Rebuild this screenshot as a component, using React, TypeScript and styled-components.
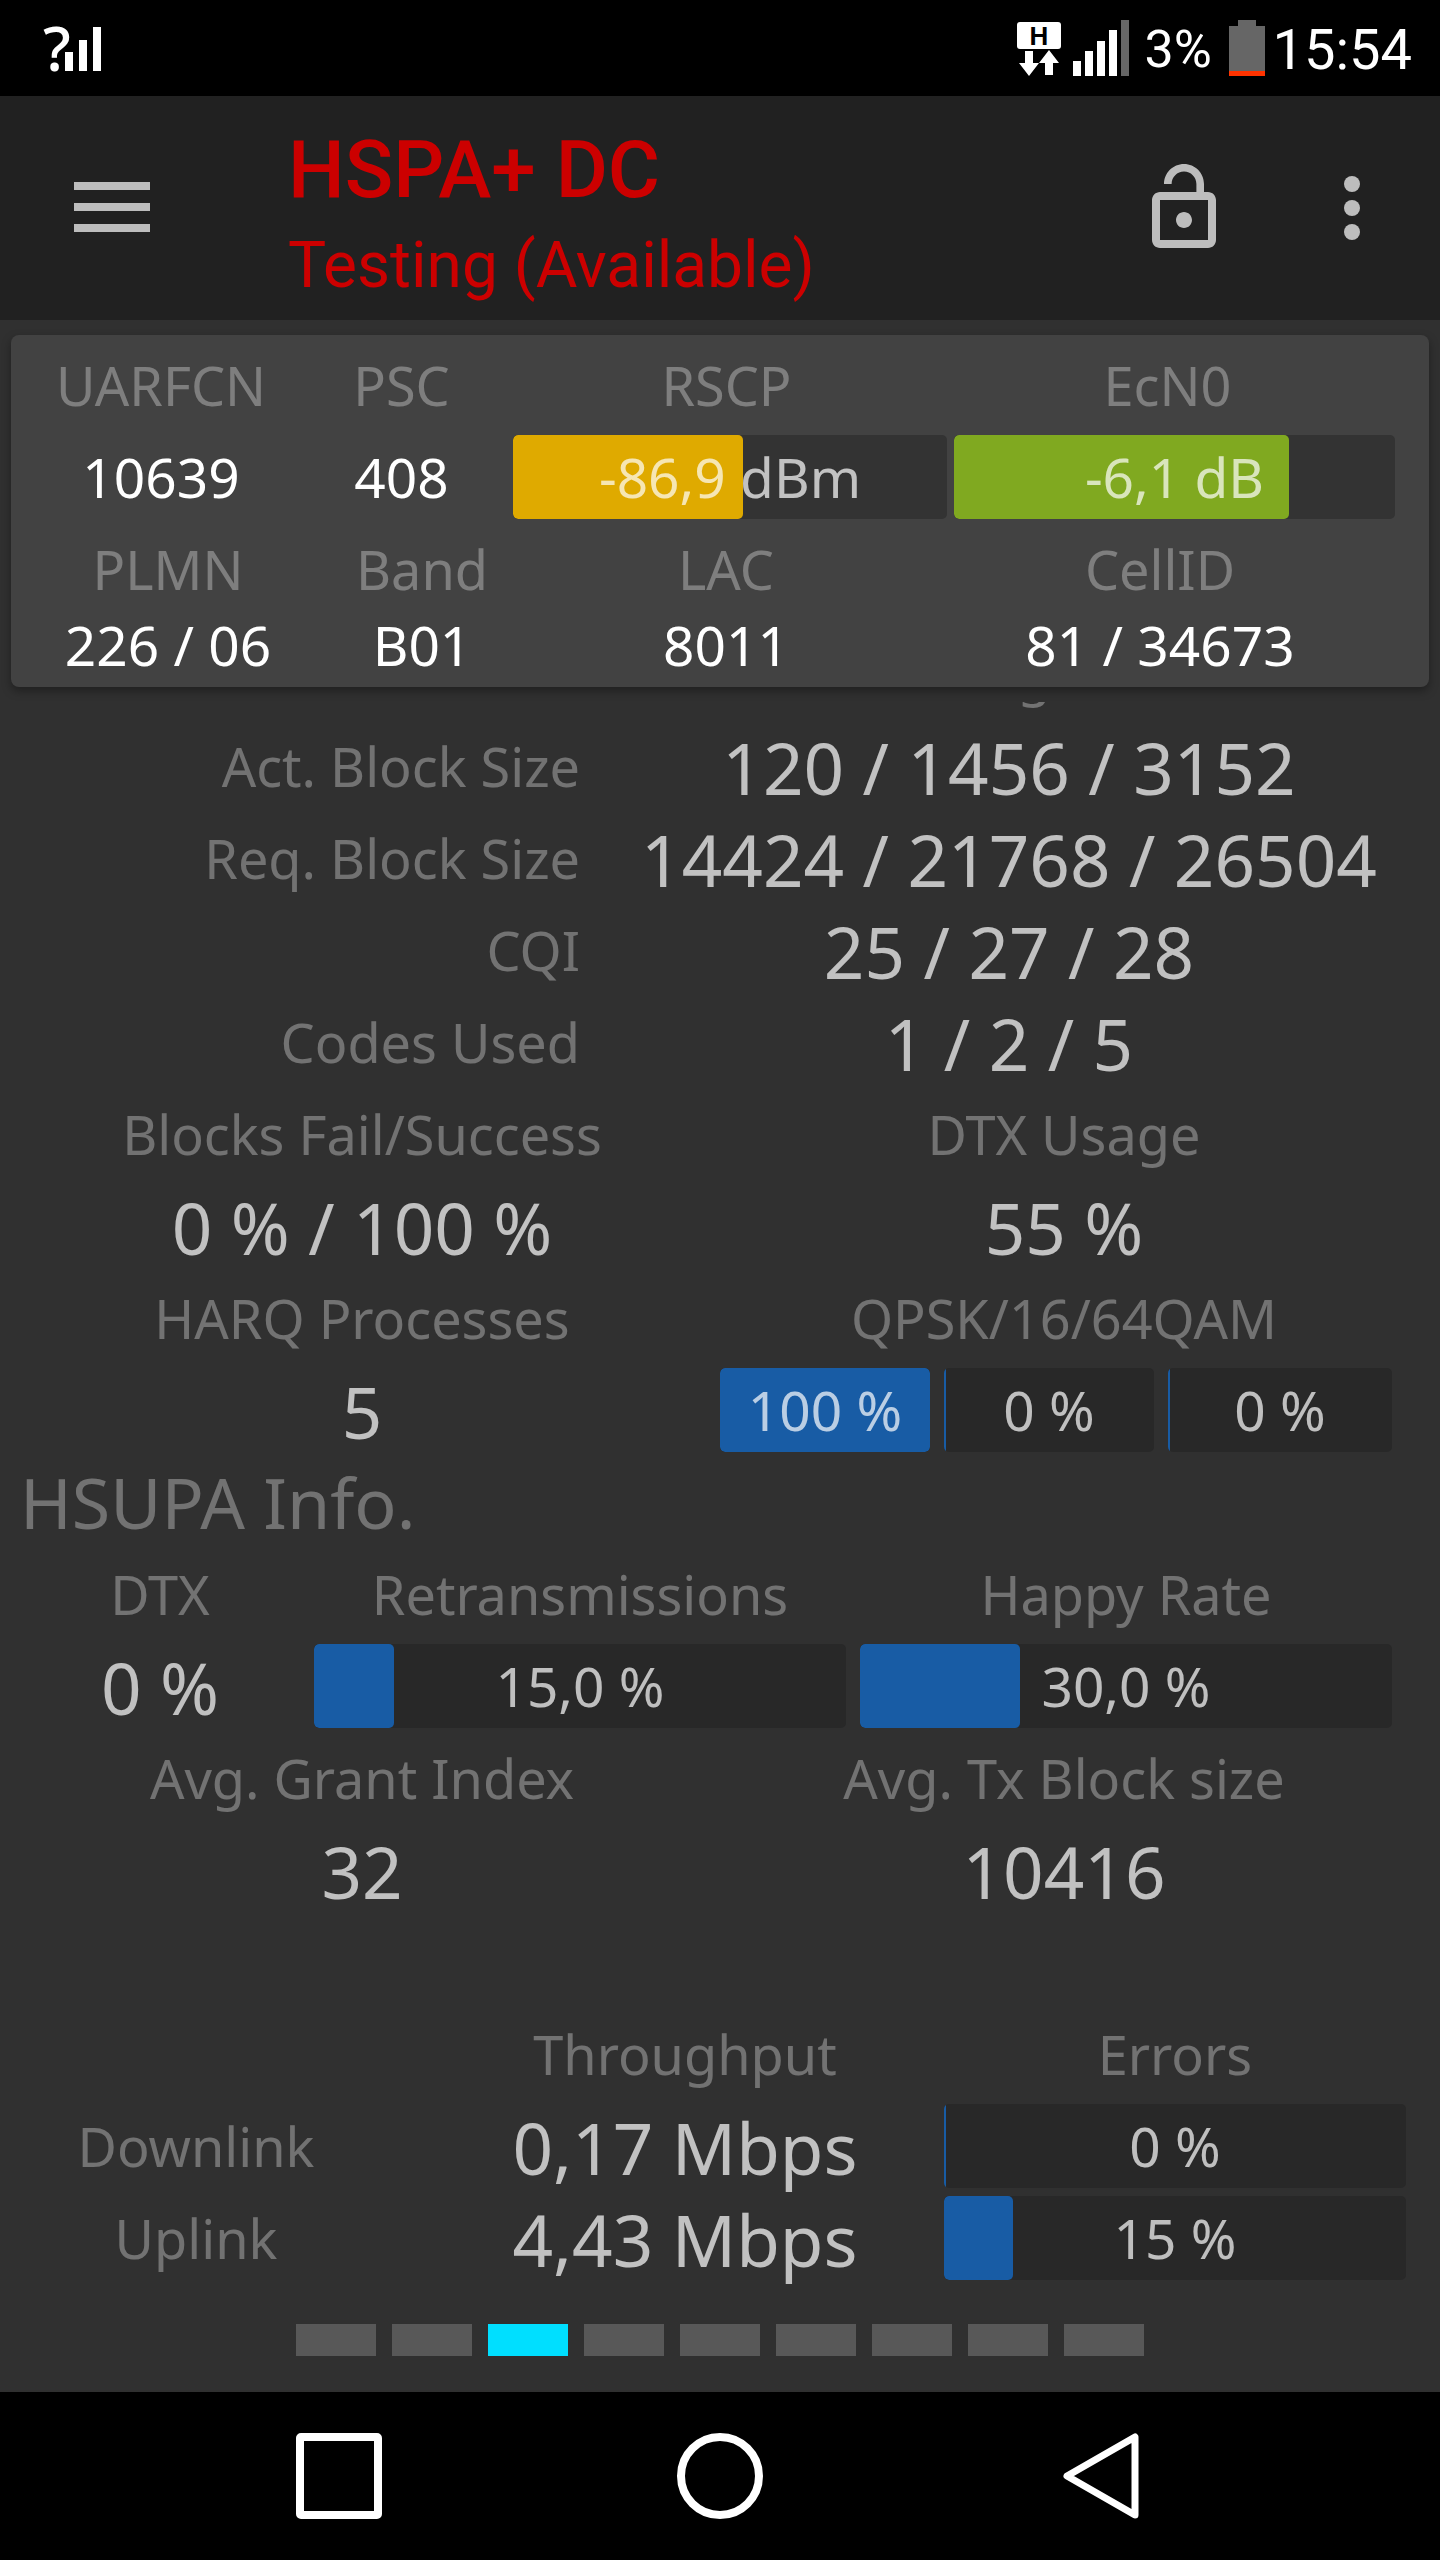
import React from "react";
import styled, { createGlobalStyle } from "styled-components";

const GlobalStyle = createGlobalStyle`
  * { box-sizing: border-box; }
  body {
    margin: 0;
    background: #303030;
    font-family: "Noto Sans", "Open Sans", sans-serif;
  }
  button { border: 0; padding: 0; background: none; color: inherit; font: inherit; cursor: pointer; }
  svg { display: block; }
`;

const label = "rgba(255, 255, 255, 0.32)";
const soft = "rgba(255, 255, 255, 0.7)";

const Screen = styled.div`
  min-height: 100vh;
  display: flex;
  flex-direction: column;
  background: #303030;
`;

/* ---------- status bar ---------- */

const StatusBar = styled.div`
  height: 96px;
  padding: 0 28px 0 43px;
  display: flex;
  align-items: center;
  justify-content: space-between;
  background: #000;
  color: #fff;
  font-family: Roboto, sans-serif;
`;

const StatusGroup = styled.div`
  display: flex;
  align-items: center;
`;

const Battery = styled.span`
  width: 82px;
  padding: 4px 0 0 4px;
  font-size: 52px;
  line-height: 92px;
`;

const Clock = styled.span`
  padding: 4px 0 0 8px;
  font-size: 56px;
  line-height: 92px;
`;

/* ---------- app bar ---------- */

const AppBar = styled.header`
  min-height: 224px;
  padding: 0 40px 0 64px;
  display: flex;
  align-items: center;
  gap: 72px;
  background: #212121;
  color: #bdbdbd;
`;

const IconButton = styled.button`
  width: 96px;
  height: 96px;
  display: grid;
  place-items: center;
  flex: none;
`;

const Titles = styled.div`
  flex: 1;
  padding: 20px 0 0 56px;
  color: #c00;
  font-family: Roboto, sans-serif;
  line-height: 96px;
  white-space: nowrap;
`;

const Title = styled.h1`
  margin: 0;
  font-size: 80px;
  font-weight: 500;
`;

const Subtitle = styled.div`
  font-size: 64px;
`;

/* ---------- shared pieces ---------- */

const Row = styled.div<{ $columns: string; $short?: boolean }>`
  height: ${(p) => (p.$short ? 60 : 92)}px;
  display: grid;
  grid-template-columns: ${(p) => p.$columns};
  align-items: center;
  text-align: center;
  white-space: nowrap;
`;

const Label = styled.div`
  color: ${label};
  font-size: 54px;
  line-height: 60px;
`;

const EndLabel = styled(Label)`
  text-align: right;
`;

const Value = styled.div`
  padding-top: 4px;
  color: ${soft};
  font-size: 71px;
  line-height: 88px;
`;

const Track = styled.div<{ $onCard?: boolean }>`
  height: 84px;
  display: grid;
  border-radius: 5px;
  overflow: hidden;
  background: ${(p) => (p.$onCard ? "#333" : "#282828")};
`;

const Fill = styled.div<{ $color: string; $empty: boolean }>`
  grid-area: 1 / 1;
  min-width: 2px;
  border-radius: ${(p) => (p.$empty ? 0 : 5)}px;
  background: ${(p) => p.$color};
`;

const TrackText = styled.div`
  grid-area: 1 / 1;
  color: ${soft};
  font-size: 55px;
  line-height: 84px;
  text-align: center;
  white-space: nowrap;
`;

interface MeterProps {
  name: string;
  percent: number;
  text: string;
  color?: string;
  onCard?: boolean;
}

function Meter({ name, percent, text, color = "#185ca5", onCard }: MeterProps) {
  return (
    <Track $onCard={onCard} role="meter" aria-label={name} aria-valuenow={percent} aria-valuemin={0} aria-valuemax={100}>
      <Fill $color={color} $empty={percent === 0} style={{ width: `${percent}%` }} />
      <TrackText>{text}</TrackText>
    </Track>
  );
}

/* ---------- serving cell card ---------- */

const Card = styled.section`
  margin: 15px 11px;
  padding: 4px 21px 12px;
  border-radius: 8px;
  background: #424242;
  box-shadow: 0 4px 10px rgba(0, 0, 0, 0.35);
`;

const CardValue = styled.div`
  color: #fff;
  font-size: 55px;
  line-height: 60px;
`;

const CardMeters = styled.div`
  display: grid;
  grid-template-columns: 434fr 441fr;
  column-gap: 7px;
`;

/* ---------- scrolled details ---------- */

const Viewport = styled.main`
  flex: 1;
  overflow: hidden;
`;

/* The list is scrolled until its first row is nearly out of view. */
const Details = styled.div`
  margin-top: -74px;
  padding-left: 20px;
`;

const SideRow = styled(Row)`
  column-gap: 16px;
  padding-right: 18px;
`;

const HalfRow = styled(Row)`
  padding-right: 16px;
`;

const MeterRow = styled(Row)`
  column-gap: 14px;
  padding-right: 48px;
`;

const Modulation = styled.div`
  padding: 0 32px 0 16px;
  display: grid;
  grid-template-columns: 210fr 210fr 224fr;
  column-gap: 14px;
`;

const SectionTitle = styled.h2`
  margin: 0;
  color: ${label};
  font-size: 70px;
  font-weight: 400;
  line-height: 92px;
  text-align: left;
`;

/* ---------- throughput table ---------- */

const Table = styled.table`
  width: 100%;
  border-collapse: collapse;
  table-layout: fixed;
  white-space: nowrap;
  text-align: center;

  th, td { height: 92px; padding: 0; }
  th {
    color: ${label};
    font-size: 54px;
    font-weight: 400;
    line-height: 60px;
  }
  th:first-child, thead td:first-child { width: 426px; padding: 0 56px 0 22px; }
  th:last-child, td:last-child { width: 496px; padding-right: 34px; }
`;

/* ---------- page marks and navigation ---------- */

const Pager = styled.div`
  padding: 40px 0 36px;
  display: flex;
  justify-content: center;
  gap: 16px;
`;

const PageMark = styled.button<{ $active: boolean }>`
  width: 80px;
  height: 32px;
  background: ${(p) => (p.$active ? "#00dfff" : "#585858")};
`;

const NavBar = styled.nav`
  height: 168px;
  padding: 0 148px;
  display: grid;
  grid-template-columns: repeat(3, 1fr);
  place-items: center;
  background: #000;
`;

const blockRows = [
  { name: "Act. Block Size", value: "120 / 1456 / 3152" },
  { name: "Req. Block Size", value: "14424 / 21768 / 26504" },
  { name: "CQI", value: "25 / 27 / 28" },
  { name: "Codes Used", value: "1 / 2 / 5" },
];

const traffic = [
  { name: "Downlink", rate: "0,17 Mbps", errors: 0 },
  { name: "Uplink", rate: "4,43 Mbps", errors: 15 },
];

const cell = "272fr 236fr 372fr 496fr";
const side = "560fr 826fr";
const half = "684fr 720fr";
const thirds = "280fr 532fr 532fr";

export default function App() {
  return (
    <Screen>
      <GlobalStyle />
      <StatusBar>
        <svg width="60" height="52" viewBox="0 0 60 52" fill="#fff" overflow="visible" role="img" aria-label="Unknown signal">
          <text x="0" y="49" fontFamily="Noto Sans" fontSize="62" fontWeight="500">?</text>
          <path d="M22 30h8v19h-8zM36 18h8v31h-8zM50 5h8v44h-8z" />
        </svg>
        <StatusGroup>
          <svg width="124" height="56" viewBox="0 0 124 56" fill="#fff" role="img" aria-label="HSPA, 4 of 5 bars">
            <rect y="2" width="44" height="27" rx="3" />
            <text x="22" y="25" textAnchor="middle" fill="#000" fontFamily="Liberation Sans" fontSize="26" fontWeight="700">H</text>
            <path d="M8 31h8v12h6L12 56 2 43h6zM28 55h8V43h6L32 30 22 43h6z" />
            <path d="M56 41h8v15h-8zM68 31h8v25h-8zM80 21h8v35h-8zM92 10h8v46h-8z" />
            <path fill="#666" d="M104 0h8v56h-8z" />
          </svg>
          <Battery>3%</Battery>
          <svg width="42" height="56" viewBox="0 0 42 56" aria-hidden="true">
            <path fill="#666" d="M6 6h9V0h18v6h9v45H6z" />
            <path fill="#f30" d="M6 51h36v5H6z" />
          </svg>
          <Clock>15:54</Clock>
        </StatusGroup>
      </StatusBar>

      <AppBar>
        <IconButton aria-label="Menu">
          <svg width="76" height="52" viewBox="0 0 76 52" fill="currentColor">
            <path d="M0 0h76v8H0zM0 21h76v8H0zM0 42h76v8H0z" />
          </svg>
        </IconButton>
        <Titles>
          <Title>HSPA+ DC</Title>
          <Subtitle>Testing (Available)</Subtitle>
        </Titles>
        <IconButton aria-label="Unlock">
          <svg width="96" height="96" viewBox="0 0 24 24" fill="currentColor">
            <path d="M12 17c1.1 0 2-.9 2-2s-.9-2-2-2-2 .9-2 2 .9 2 2 2zm6-9h-1V6c0-2.76-2.24-5-5-5S7 3.24 7 6h1.9c0-1.71 1.39-3.1 3.1-3.1 1.71 0 3.1 1.39 3.1 3.1v2H6c-1.1 0-2 .9-2 2v10c0 1.1.9 2 2 2h12c1.1 0 2-.9 2-2V10c0-1.1-.9-2-2-2zm0 12H6V10h12v10z" />
          </svg>
        </IconButton>
        <IconButton aria-label="More options">
          <svg width="96" height="96" viewBox="0 0 24 24" fill="currentColor">
            <circle cx="12" cy="6" r="2" />
            <circle cx="12" cy="12" r="2" />
            <circle cx="12" cy="18" r="2" />
          </svg>
        </IconButton>
      </AppBar>

      <Card>
        <Row $columns="258fr 223fr 427fr 455fr 13fr">
          <Label>UARFCN</Label>
          <Label>PSC</Label>
          <Label>RSCP</Label>
          <Label>EcN0</Label>
        </Row>
        <Row $columns="258fr 223fr 882fr 13fr">
          <CardValue>10639</CardValue>
          <CardValue>408</CardValue>
          <CardMeters>
            <Meter name="RSCP" percent={53} text="-86,9 dBm" color="#dfaa00" onCard />
            <Meter name="EcN0" percent={76} text="-6,1 dB" color="#80a920" onCard />
          </CardMeters>
        </Row>
        <Row $columns={cell}>
          <Label>PLMN</Label>
          <Label>Band</Label>
          <Label>LAC</Label>
          <Label>CellID</Label>
        </Row>
        <Row $columns={cell} $short>
          <CardValue>226 / 06</CardValue>
          <CardValue>B01</CardValue>
          <CardValue>8011</CardValue>
          <CardValue>81 / 34673</CardValue>
        </Row>
      </Card>

      <Viewport>
        <Details>
          <SideRow $columns={side}>
            <SectionTitle>HSDPA</SectionTitle>
            <Label>Min/Avg/Max</Label>
          </SideRow>
          {blockRows.map((row) => (
            <SideRow key={row.name} $columns={side}>
              <EndLabel>{row.name}</EndLabel>
              <Value>{row.value}</Value>
            </SideRow>
          ))}
          <HalfRow $columns={half}>
            <Label>Blocks Fail/Success</Label>
            <Label>DTX Usage</Label>
          </HalfRow>
          <HalfRow $columns={half}>
            <Value>0 % / 100 %</Value>
            <Value>55 %</Value>
          </HalfRow>
          <HalfRow $columns={half}>
            <Label>HARQ Processes</Label>
            <Label>QPSK/16/64QAM</Label>
          </HalfRow>
          <HalfRow $columns={half}>
            <Value>5</Value>
            <Modulation>
              <Meter name="QPSK" percent={100} text="100 %" />
              <Meter name="16QAM" percent={0} text="0 %" />
              <Meter name="64QAM" percent={0} text="0 %" />
            </Modulation>
          </HalfRow>
          <SectionTitle>HSUPA Info.</SectionTitle>
          <MeterRow $columns={thirds}>
            <Label>DTX</Label>
            <Label>Retransmissions</Label>
            <Label>Happy Rate</Label>
          </MeterRow>
          <MeterRow $columns={thirds}>
            <Value>0 %</Value>
            <Meter name="Retransmissions" percent={15} text="15,0 %" />
            <Meter name="Happy Rate" percent={30} text="30,0 %" />
          </MeterRow>
          <HalfRow $columns={half}>
            <Label>Avg. Grant Index</Label>
            <Label>Avg. Tx Block size</Label>
          </HalfRow>
          <HalfRow $columns={half}>
            <Value>32</Value>
            <Value>10416</Value>
          </HalfRow>
        </Details>
      </Viewport>

      <Table>
        <thead>
          <tr>
            <td />
            <th scope="col">Throughput</th>
            <th scope="col">Errors</th>
          </tr>
        </thead>
        <tbody>
          {traffic.map((row) => (
            <tr key={row.name}>
              <th scope="row">{row.name}</th>
              <td>
                <Value>{row.rate}</Value>
              </td>
              <td>
                <Meter name={`${row.name} errors`} percent={row.errors} text={`${row.errors} %`} />
              </td>
            </tr>
          ))}
        </tbody>
      </Table>

      <Pager>
        {Array.from({ length: 9 }, (_, i) => (
          <PageMark key={i} $active={i === 2} aria-label={`Page ${i + 1}`} />
        ))}
      </Pager>

      <NavBar>
        <IconButton aria-label="Recent apps">
          <svg width="88" height="88" viewBox="0 0 88 88" fill="none" stroke="#fff" strokeWidth="8">
            <rect x="5" y="5" width="78" height="78" rx="1" strokeLinejoin="round" />
          </svg>
        </IconButton>
        <IconButton aria-label="Home">
          <svg width="88" height="88" viewBox="0 0 88 88" fill="none" stroke="#fff" strokeWidth="8">
            <circle cx="44" cy="44" r="39" />
          </svg>
        </IconButton>
        <IconButton aria-label="Back">
          <svg width="88" height="88" viewBox="0 0 88 88" fill="none" stroke="#fff" strokeWidth="7">
            <path d="M78 5v78L10 44z" strokeLinejoin="round" />
          </svg>
        </IconButton>
      </NavBar>
    </Screen>
  );
}
